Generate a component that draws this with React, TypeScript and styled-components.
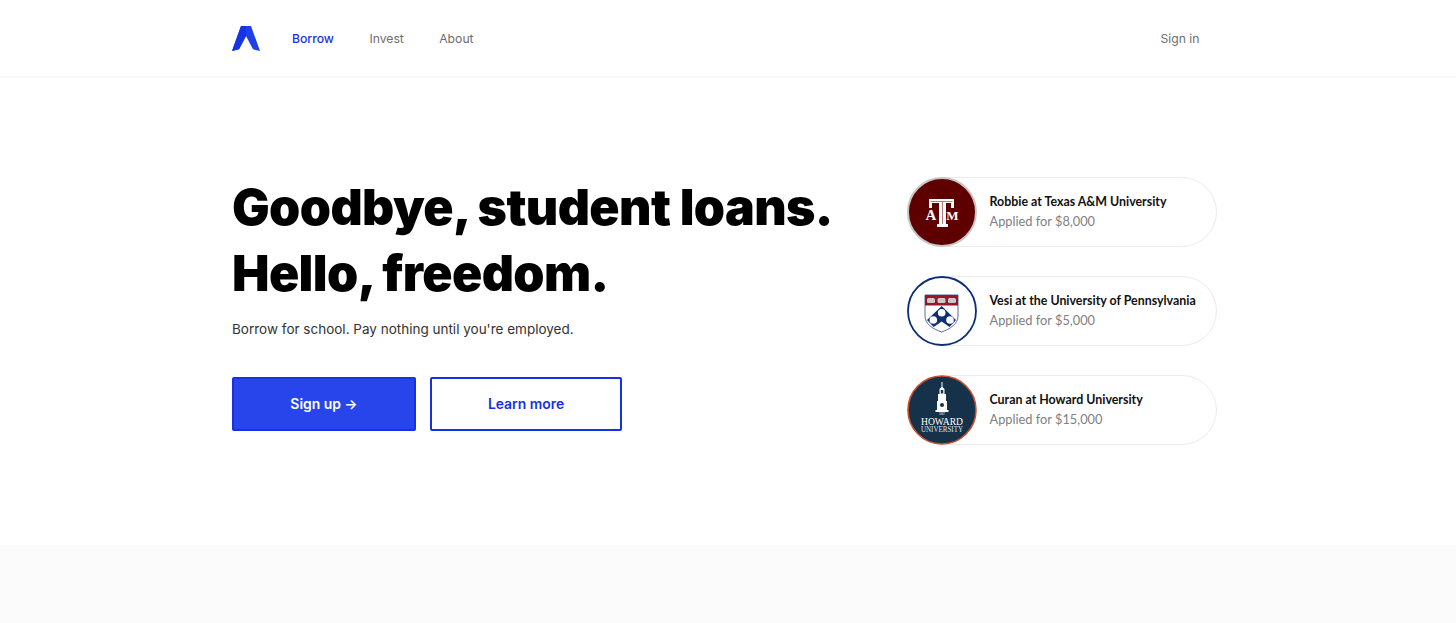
import { ReactNode } from "react";
import styled, { createGlobalStyle } from "styled-components";

const GlobalStyle = createGlobalStyle`
  html, body {
    margin: 0;
    padding: 0;
    background: #fff;
    font-family: Inter, "Liberation Sans", sans-serif;
  }
`;

const Page = styled.div`
  display: flex;
  flex-direction: column;
  height: 623px;
  overflow: hidden;
`;

const Nav = styled.nav`
  display: flex;
  flex: none;
  align-items: center;
  box-sizing: border-box;
  height: 78px;
  padding: 0 256.500px 0 232px;
  border-bottom: 2px solid #f7f7f7;
`;

const Logo = styled.svg`
  width: 28px;
  height: 25px;
  margin-right: 32px;
`;

const NavLink = styled.a<{ $active?: boolean }>`
  margin-right: 35.400px;
  font-size: 12.2px;
  font-weight: ${(p) => (p.$active ? 500 : 400)};
  color: ${(p) => (p.$active ? "#1530e6" : "#6e6e6e")};
`;

const SignIn = styled(NavLink)`
  margin-left: auto;
  margin-right: 0;
`;

const Hero = styled.main`
  display: flex;
  flex: none;
  justify-content: space-between;
  align-items: flex-start;
  box-sizing: border-box;
  height: 467px;
  padding: 96px 239px 0 232px;
`;

const Intro = styled.div`
  display: flex;
  flex-direction: column;
`;

const Headline = styled.h1`
  margin: 0;
  font-size: 50px;
  font-weight: 900;
  line-height: 66px;
  letter-spacing: -0.6px;
  color: #000;
`;

const Lead = styled.p`
  margin: 11px 0 0;
  font-size: 13.5px;
  line-height: 24px;
  color: #333;
`;

const Actions = styled.div`
  display: flex;
  gap: 14px;
  margin-top: 36px;
`;

const Button = styled.a<{ $solid?: boolean }>`
  display: flex;
  align-items: center;
  justify-content: center;
  box-sizing: border-box;
  width: ${(p) => (p.$solid ? "184px" : "192px")};
  height: 54px;
  font-size: 13.9px;
  font-weight: 600;
  border: 2px solid #1530e6;
  border-radius: 2px;
  color: ${(p) => (p.$solid ? "#fff" : "#1530e6")};
  background: ${(p) => (p.$solid ? "#2745ea" : "#fff")};
`;

const Pills = styled.ul`
  display: flex;
  flex-direction: column;
  gap: 29px;
  margin: 3px 0 0;
  padding: 0;
  list-style: none;
`;

const Pill = styled.li`
  display: flex;
  align-items: center;
  box-sizing: border-box;
  width: 310px;
  height: 70px;
  border: 1.5px solid #ebebeb;
  border-radius: 35px;
`;

const Badge = styled.svg`
  flex: none;
  width: 70px;
  height: 70px;
  margin-left: -1.5px;
`;

const PillText = styled.div`
  display: flex;
  flex-direction: column;
  gap: 5px;
  margin: -2px 0 0 13px;
`;

const Name = styled.span`
  font-family: Lato, sans-serif;
  font-size: 12.4px;
  font-weight: 700;
  line-height: 15px;
  color: #111;
`;

const Applied = styled.span`
  font-family: Lato, sans-serif;
  font-size: 12.8px;
  line-height: 15px;
  color: #808080;
`;

const Band = styled.div`
  flex: 1;
  background: #fbfbfb;
`;

const AggieBadge = () => (
  <Badge viewBox="0 0 70 70">
    <circle cx="35" cy="35" r="34" fill="#5f0000" stroke="#c9c5c5" strokeWidth="2" />
    <path d="M22 22h25v9h-3v-5H39v21h2v3H30v-3h2V26h-7v5h-3z" fill="#fff" />
    <path d="M23.500 24.500h22M35.500 25v22" stroke="#5f0000" strokeWidth="0.500" fill="none" />
    <text x="24" y="43" fontFamily="Liberation Serif, serif" fontSize="15" fontWeight="700" fill="#fff" textAnchor="middle">A</text>
    <text x="45.500" y="43" fontFamily="Liberation Serif, serif" fontSize="13" fontWeight="700" fill="#fff" textAnchor="middle">M</text>
  </Badge>
);

const PennBadge = () => (
  <Badge viewBox="0 0 70 70">
    <circle cx="35" cy="35" r="34" fill="#fff" stroke="#0b2d78" strokeWidth="1.800" />
    <path d="M18 19h33v21c0 8-8 13-16.300 16C26 53 18 48 18 40z" fill="#fff" stroke="#11306f" strokeWidth="0.700" />
    <rect x="18" y="19" width="33" height="10.500" fill="#97182c" />
    <rect x="20" y="22" width="8" height="5" rx="1.500" fill="#cfc6ca" />
    <rect x="30.500" y="22" width="8" height="5" rx="1.500" fill="#cfc6ca" />
    <rect x="41" y="22" width="8" height="5" rx="1.500" fill="#cfc6ca" />
    <path d="M34.700 30 49 44l-6.500 7-7.800-5.500-8 5.500-6.700-7z" fill="#11306f" />
    <circle cx="34.700" cy="36.700" r="3.800" fill="#fff" />
    <circle cx="26.300" cy="44" r="3.800" fill="#fff" />
    <circle cx="43" cy="44" r="3.800" fill="#fff" />
  </Badge>
);

const HowardBadge = () => (
  <Badge viewBox="0 0 70 70">
    <circle cx="35" cy="35" r="34" fill="#16324b" stroke="#c8502c" strokeWidth="1.600" />
    <path d="M34.500 7h1v5l2 2v5h1.500v7h1v9h1.500v2H28.500v-2H30v-9h1v-7h1.500v-5l2-2z" fill="#fff" />
    <rect x="33.800" y="15" width="2.400" height="3.500" fill="#16324b" />
    <circle cx="35" cy="30" r="2" fill="#16324b" />
    <text x="35" y="39.500" fontFamily="Liberation Serif, serif" fontSize="3" fill="#fff" textAnchor="middle">1867</text>
    <text x="14" y="50" fontFamily="Liberation Serif, serif" fontSize="10.500" fill="#fff" textLength="42" lengthAdjust="spacingAndGlyphs">HOWARD</text>
    <text x="14" y="57" fontFamily="Liberation Serif, serif" fontSize="7.500" fill="#dfe4ea" textLength="42" lengthAdjust="spacingAndGlyphs">UNIVERSITY</text>
  </Badge>
);

const applicants: { badge: ReactNode; name: string; amount: string }[] = [
  { badge: <AggieBadge />, name: "Robbie at Texas A&M University", amount: "$8,000" },
  { badge: <PennBadge />, name: "Vesi at the University of Pennsylvania", amount: "$5,000" },
  { badge: <HowardBadge />, name: "Curan at Howard University", amount: "$15,000" },
];

function App() {
  return (
    <Page>
      <GlobalStyle />
      <Nav>
        <Logo viewBox="0 0 28 25">
          <path d="M9 0h10l9 25-7-1.700L14 10 7 23.300 0 25z" fill="#1f40e8" />
          <path d="M9 0h5v10L7 23.300 0 25z" fill="#1733e6" />
        </Logo>
        <NavLink $active>Borrow</NavLink>
        <NavLink>Invest</NavLink>
        <NavLink>About</NavLink>
        <SignIn>Sign in</SignIn>
      </Nav>
      <Hero>
        <Intro>
          <Headline>
            Goodbye, student loans.
            <br />
            Hello, freedom.
          </Headline>
          <Lead>Borrow for school. Pay nothing until you're employed.</Lead>
          <Actions>
            <Button $solid>Sign up →</Button>
            <Button>Learn more</Button>
          </Actions>
        </Intro>
        <Pills>
          {applicants.map((a) => (
            <Pill key={a.name}>
              {a.badge}
              <PillText>
                <Name>{a.name}</Name>
                <Applied>Applied for {a.amount}</Applied>
              </PillText>
            </Pill>
          ))}
        </Pills>
      </Hero>
      <Band />
    </Page>
  );
}

export default App;
